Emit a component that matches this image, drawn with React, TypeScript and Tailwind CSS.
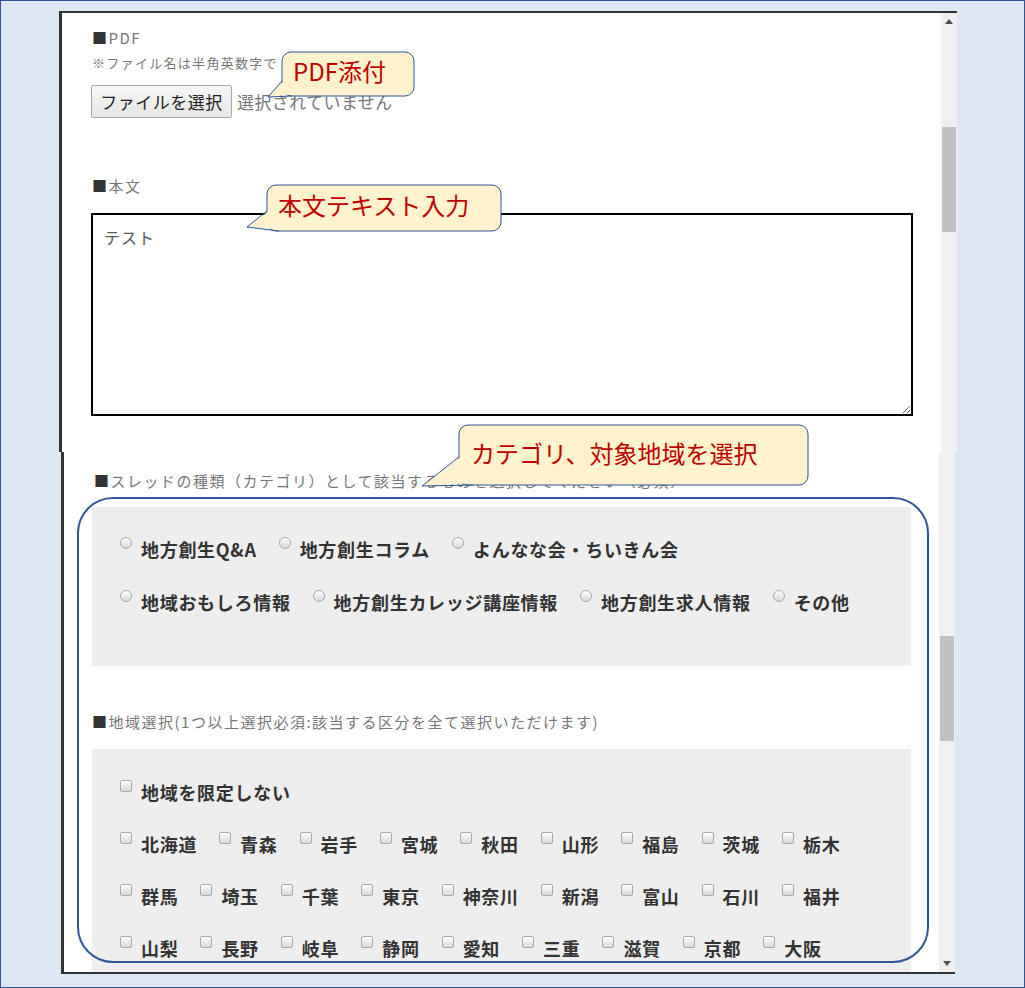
import type { ReactNode } from 'react';

const jp = "font-['Noto_Sans_CJK_JP',sans-serif]";

const categoryRows = [
  ['地方創生Q&A', '地方創生コラム', 'よんなな会・ちいきん会'],
  ['地域おもしろ情報', '地方創生カレッジ講座情報', '地方創生求人情報', 'その他'],
];

const prefRows = [
  ['地域を限定しない'],
  ['北海道', '青森', '岩手', '宮城', '秋田', '山形', '福島', '茨城', '栃木'],
  ['群馬', '埼玉', '千葉', '東京', '神奈川', '新潟', '富山', '石川', '福井'],
  ['山梨', '長野', '岐阜', '静岡', '愛知', '三重', '滋賀', '京都', '大阪'],
];

// speech bubbles drawn on top of the screenshot
const callouts = [
  { x: 282, y: 52, w: 132, h: 44, b1: [282, 81], tip: [268, 97], b2: [292, 96], text: 'PDF添付', tx: 293, ty: 54 },
  { x: 267, y: 185, w: 234, h: 46, b1: [267, 211], tip: [247, 227], b2: [279, 231], text: '本文テキスト入力', tx: 278, ty: 188 },
  { x: 459, y: 425, w: 349, h: 60, b1: [459, 457], tip: [422, 486], b2: [473, 485], text: 'カテゴリ、対象地域を選択', tx: 471, ty: 436 },
];

function Box({ round }: { round?: boolean }) {
  return (
    <span
      className={`mt-[3px] mr-[9px] h-3 w-3 shrink-0 border border-[#a9a9a9] bg-linear-to-b from-white to-[#d8d8d8] ${
        round ? 'rounded-full' : 'rounded-[2px]'
      }`}
    />
  );
}

function Option({ label, round }: { label: string; round?: boolean }) {
  return (
    <div className="mr-[22px] flex items-start">
      <Box round={round} />
      <span className="text-[18px] leading-[30px] font-bold tracking-[0.7px] text-[#333]">{label}</span>
    </div>
  );
}

function Heading({ children }: { children: ReactNode }) {
  return (
    <p className="text-[15px] leading-[22px] tracking-[1.5px] text-[#777]">
      <span className="text-[#333]">■</span>
      {children}
    </p>
  );
}

export default function App() {
  return (
    <div className={`relative h-[988px] w-[1025px] overflow-hidden border border-[#2f5597] bg-[#dde8f4] pt-[10px] ${jp}`}>
      {/* upper capture */}
      <div className="ml-[58px] flex h-[441px] w-[898px] border-t-2 border-l-[3px] border-[#333] bg-white">
        <div className="flex-1 pt-[14px] pl-[30px]">
          <Heading>PDF</Heading>
          <p className="mt-[5px] text-[13px] leading-[18px] tracking-[1.3px] text-[#777]">※ファイル名は半角英数字で</p>
          <div className="mt-[13px] flex items-center">
            <button className="-ml-px h-[33px] w-[141px] rounded-[2px] border border-[#a9a9a9] bg-linear-to-b from-[#f6f6f6] to-[#e6e6e6] text-[17px] tracking-[0.5px] text-[#222]">
              ファイルを選択
            </button>
            <span className="ml-[5px] text-[17px] tracking-[0.4px] text-[#777]">選択されていません</span>
          </div>
          <div className="mt-[57px]">
            <Heading>本文</Heading>
          </div>
          <textarea
            readOnly
            defaultValue="テスト"
            className="mt-[16px] -ml-px block h-[203px] w-[822px] border-2 border-black bg-white px-[11px] pt-[10px] text-[16px] leading-[24px] tracking-[1px] text-[#555] outline-none"
          />
        </div>
        <div className="flex w-[16px] flex-col bg-[#f0f0f0]">
          <div className="flex h-[17px] items-center justify-center">
            <svg width="8" height="5" viewBox="0 0 8 5">
              <path d="M0 5 L4 0 L8 5 Z" fill="#505050" />
            </svg>
          </div>
          <div className="mx-px mt-[97px] h-[105px] bg-[#c1c1c1]" />
        </div>
      </div>

      {/* lower capture */}
      <div className="ml-[60px] flex h-[522px] w-[894px] overflow-hidden border-b-2 border-l-[3px] border-[#333] bg-white">
        <div className="flex-1">
          <div className="mt-[18px] pl-[30px]">
            <Heading>スレッドの種類（カテゴリ）として該当するものを選択してください（必須）</Heading>
          </div>
          <div className="mt-[15px] ml-[28px] h-[159px] w-[819px] bg-[#eeeeee] pt-[27px] pl-[28px]">
            {categoryRows.map((row, i) => (
              <div key={i} className={`flex h-[30px] ${i > 0 ? 'mt-[23px]' : ''}`}>
                {row.map((c) => (
                  <Option key={c} label={c} round />
                ))}
              </div>
            ))}
          </div>
          <div className="mt-[45px] pl-[28px]">
            <Heading>地域選択(1つ以上選択必須:該当する区分を全て選択いただけます)</Heading>
          </div>
          <div className="mt-[16px] ml-[28px] h-[260px] w-[819px] bg-[#eeeeee] pt-[28px] pl-[28px]">
            {prefRows.map((row, i) => (
              <div key={i} className={`flex h-[30px] ${i > 0 ? 'mt-[22px]' : ''}`}>
                {row.map((p) => (
                  <Option key={p} label={p} />
                ))}
              </div>
            ))}
          </div>
        </div>
        <div className="flex w-[16px] flex-col bg-[#f0f0f0]">
          <div className="mx-px mt-[184px] h-[105px] bg-[#c1c1c1]" />
          <div className="flex-1" />
          <div className="flex h-[17px] items-center justify-center">
            <svg width="8" height="5" viewBox="0 0 8 5">
              <path d="M0 0 L8 0 L4 5 Z" fill="#505050" />
            </svg>
          </div>
        </div>
      </div>

      {/* annotation frame */}
      <div className="pointer-events-none absolute top-[496px] left-[76px] h-[466px] w-[852px] rounded-[36px] border-[2.5px] border-[#2f5597]" />

      <svg className="pointer-events-none absolute top-[-1px] left-[-1px]" width="1025" height="988">
        {callouts.map((c) => (
          <g key={c.text}>
            <rect x={c.x} y={c.y} width={c.w} height={c.h} rx="9" fill="#fff2cc" stroke="#2f5597" strokeWidth="1" />
            <polygon
              points={`${c.b1[0] + 2},${c.b1[1]} ${c.tip[0]},${c.tip[1]} ${c.b2[0]},${c.b2[1] - 2}`}
              fill="#fff2cc"
            />
            <polyline
              points={`${c.b1[0]},${c.b1[1]} ${c.tip[0]},${c.tip[1]} ${c.b2[0]},${c.b2[1]}`}
              fill="none"
              stroke="#2f5597"
              strokeWidth="1"
            />
          </g>
        ))}
      </svg>
      {callouts.map((c) => (
        <div
          key={c.text}
          className="pointer-events-none absolute text-[24px] leading-[34px] whitespace-nowrap text-[#c00000]"
          style={{ left: c.tx - 1, top: c.ty - 1 }}
        >
          {c.text}
        </div>
      ))}
    </div>
  );
}
